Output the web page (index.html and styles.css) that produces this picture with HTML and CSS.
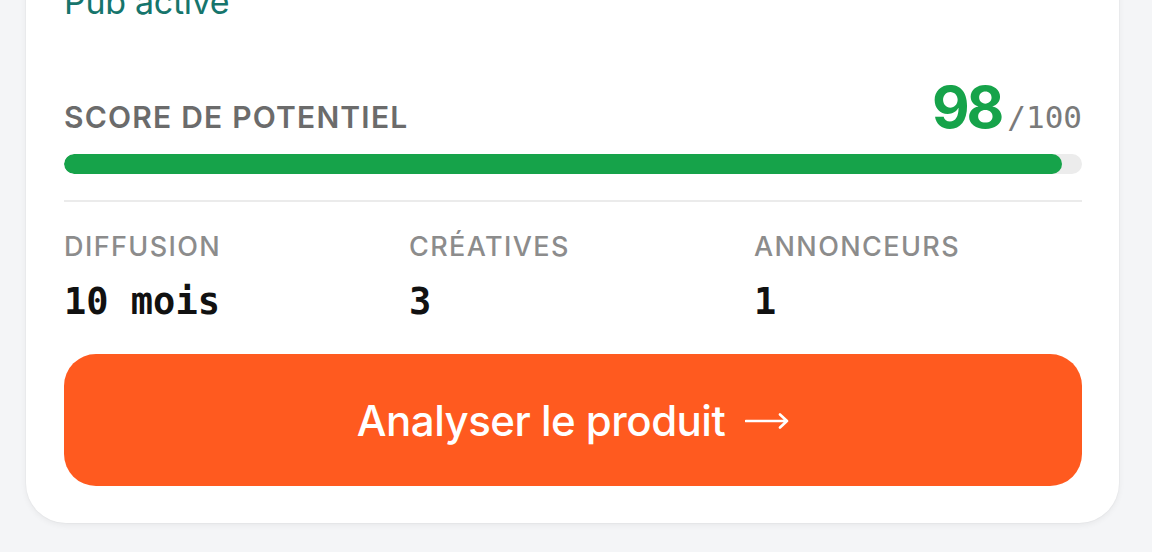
FILE: index.html
```html
<!DOCTYPE html>
<html lang="fr">
<head>
<meta charset="utf-8">
<title>Score</title>
<link rel="stylesheet" href="styles.css">
</head>
<body>
<div class="card">
  <div class="status">Pub active</div>
  <div class="score-row">
    <div class="score-label">SCORE DE POTENTIEL</div>
    <div class="score-value"><span class="score-num">98</span><span class="score-max">/100</span></div>
  </div>
  <div class="bar"><div class="bar-fill" style="width: 98%"></div></div>
  <div class="divider"></div>
  <div class="stats">
    <div class="stat">
      <div class="stat-label">DIFFUSION</div>
      <div class="stat-value">10 mois</div>
    </div>
    <div class="stat">
      <div class="stat-label">CRÉATIVES</div>
      <div class="stat-value">3</div>
    </div>
    <div class="stat">
      <div class="stat-label">ANNONCEURS</div>
      <div class="stat-value">1</div>
    </div>
  </div>
  <button class="cta"><span>Analyser le produit</span><svg class="arrow" width="44" height="18" viewBox="0 0 44 18" aria-hidden="true"><path d="M1 9H42M35 2.5L42 9L35 15.5" fill="none" stroke="#ffffff" stroke-width="2.6" stroke-linecap="round" stroke-linejoin="round"/></svg></button>
</div>
</body>
</html>
```
FILE: styles.css
```css
html, body {
  margin: 0;
  padding: 0;
  background: #f4f5f7;
  height: 100%;
  overflow: hidden;
}
body {
  font-family: "Inter", "Liberation Sans", sans-serif;
}
.card {
  margin: -60px 0 0 26px;
  width: 1093px;
  box-sizing: border-box;
  background: #ffffff;
  border-radius: 0 0 40px 40px;
  padding: 42px 37px 37px 38px;
  box-shadow: 0 2px 6px rgba(0, 0, 0, 0.06), 0 0 0 1px rgba(0, 0, 0, 0.02);
}
.status {
  font-size: 34px;
  line-height: 40px;
  color: #16756c;
  font-weight: 400;
  letter-spacing: -0.3px;
}
.score-row {
  display: flex;
  justify-content: space-between;
  align-items: baseline;
  margin-top: 56px;
  height: 59px;
}
.score-label {
  font-size: 30px;
  font-weight: 600;
  color: #6b6b6b;
  letter-spacing: 1.2px;
}
.score-value {
  display: flex;
  align-items: baseline;
}
.score-num {
  font-size: 58px;
  line-height: 1;
  font-weight: 700;
  color: #16a34a;
  letter-spacing: -3px;
}
.score-max {
  font-family: "DejaVu Sans Mono", "Liberation Mono", monospace;
  font-size: 31px;
  color: #7a7a7a;
  margin-left: 6px;
}
.bar {
  margin-top: 17px;
  height: 20px;
  background: #ececec;
  border-radius: 10px;
  overflow: hidden;
}
.bar-fill {
  height: 100%;
  background: #16a34a;
  border-radius: 10px;
}
.divider {
  margin-top: 26px;
  height: 2px;
  background: #ebebeb;
}
.stats {
  display: grid;
  grid-template-columns: repeat(3, 1fr);
  column-gap: 17px;
  margin-top: 29px;
}
.stat-label {
  font-size: 27px;
  line-height: 31px;
  font-weight: 500;
  color: #8c8c8c;
  letter-spacing: 1.4px;
}
.stat-value {
  margin-top: 17px;
  font-family: "DejaVu Sans Mono", "Liberation Mono", monospace;
  font-size: 37px;
  line-height: 45px;
  font-weight: 700;
  color: #111111;
}
.cta {
  display: flex;
  align-items: center;
  justify-content: center;
  width: 100%;
  height: 132px;
  margin-top: 30px;
  border: none;
  border-radius: 32px;
  background: #ff5a1f;
  color: #ffffff;
  font-family: "Inter", "Liberation Sans", sans-serif;
  font-size: 42px;
  font-weight: 500;
  letter-spacing: -0.5px;
}
.arrow {
  margin-left: 20px;
  margin-top: 2px;
}
```
